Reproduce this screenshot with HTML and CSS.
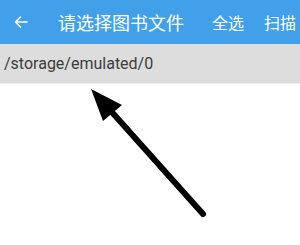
FILE: index.html
```html
<!DOCTYPE html>
<html lang="zh">
<head>
<meta charset="utf-8">
<link rel="stylesheet" href="styles.css">
</head>
<body>
<div class="screen">
  <header class="appbar">
    <svg class="back" width="14" height="12" viewBox="0 0 14 12">
      <path d="M13 6H1.5M6.5 1L1.5 6L6.5 11" fill="none" stroke="#fff" stroke-width="1.6" stroke-linecap="round" stroke-linejoin="round"/>
    </svg>
    <div class="title">请选择图书文件</div>
    <div class="actions">
      <span class="action">全选</span>
      <span class="action">扫描</span>
    </div>
  </header>
  <div class="pathbar">/storage/emulated/0</div>
  <main class="list">
    <svg class="pointer" width="300" height="162" viewBox="0 83 300 162">
      <line x1="203" y1="213" x2="110" y2="109" stroke="#000" stroke-width="6" stroke-linecap="round"/>
      <path d="M91 88L122 104L103 120Z" fill="#000"/>
    </svg>
  </main>
</div>
</body>
</html>
```
FILE: styles.css
```css
html, body {
  margin: 0;
  padding: 0;
  background: #fff;
}
.screen {
  width: 300px;
  height: 245px;
  display: flex;
  flex-direction: column;
  overflow: hidden;
  font-family: Roboto, "Noto Sans CJK SC", sans-serif;
}
.appbar {
  height: 44px;
  background: #42a0ea;
  display: flex;
  align-items: center;
  padding: 0 4px 0 14px;
  color: #fff;
}
.back {
  display: block;
  flex: none;
}
.title {
  margin-left: 30px;
  font-family: "Noto Sans CJK SC", sans-serif;
  font-size: 18px;
  line-height: 24px;
  flex: 1;
  white-space: nowrap;
}
.actions {
  display: flex;
  gap: 20px;
}
.action {
  font-family: "Noto Sans CJK SC", sans-serif;
  font-size: 16px;
  line-height: 22px;
}
.pathbar {
  height: 39px;
  background: #dcdddc;
  display: flex;
  align-items: center;
  padding-left: 4px;
  font-size: 16px;
  color: #3c3c3c;
  border-bottom: 1px solid #eeeeee;
}
.list {
  flex: 1;
  position: relative;
}
.pointer {
  position: absolute;
  left: 0;
  top: 0;
}
```
